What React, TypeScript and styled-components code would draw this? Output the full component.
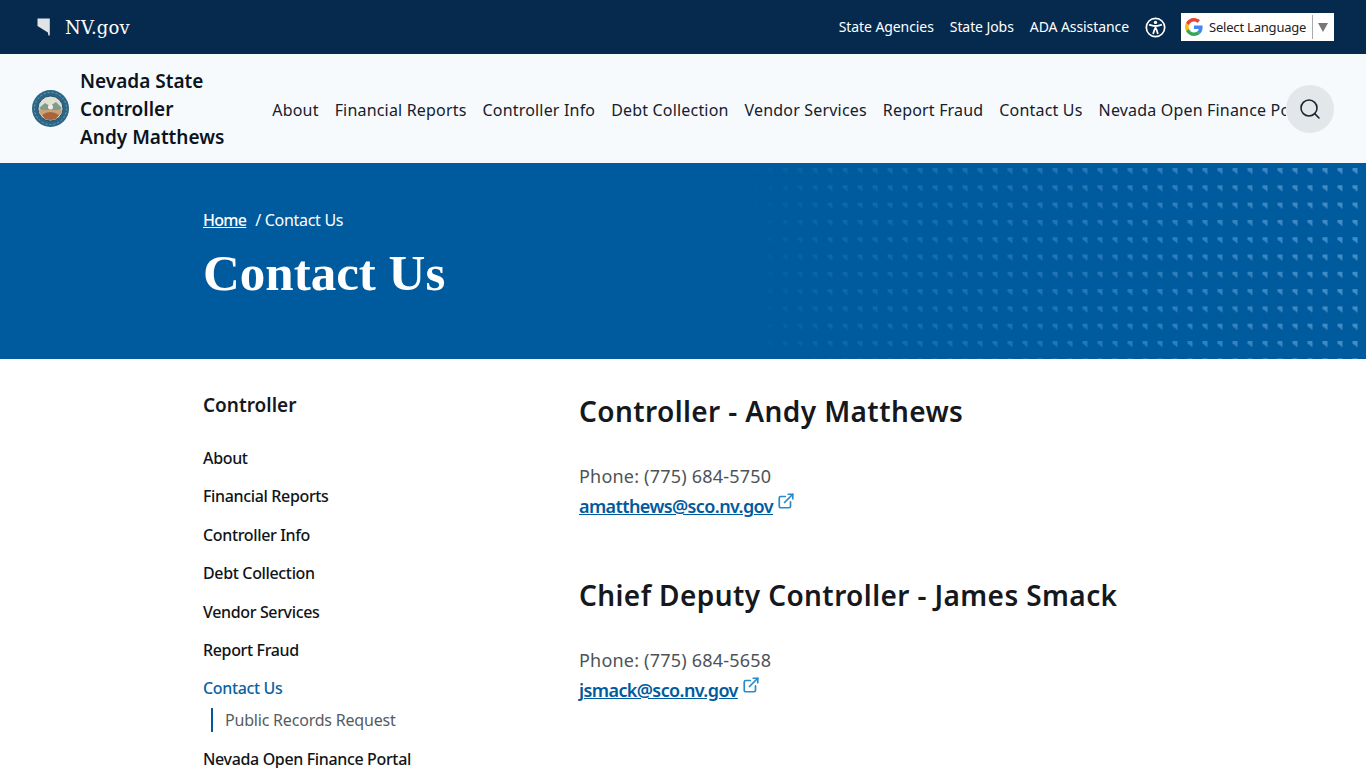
import React from 'react';
import styled, { createGlobalStyle } from 'styled-components';
import { ExternalLink, Search } from 'lucide-react';

const sans = `'Noto Sans', 'Open Sans', Arial, sans-serif`;
const serif = `'Liberation Serif', 'DejaVu Serif', Georgia, serif`;

const topLinks = ['State Agencies', 'State Jobs', 'ADA Assistance'];
const mainLinks = [
  'About',
  'Financial Reports',
  'Controller Info',
  'Debt Collection',
  'Vendor Services',
  'Report Fraud',
  'Contact Us',
  'Nevada Open Finance Portal',
];

const contacts = [
  { title: 'Controller - Andy Matthews', phone: '(775) 684-5750', email: 'amatthews@sco.nv.gov' },
  { title: 'Chief Deputy Controller - James Smack', phone: '(775) 684-5658', email: 'jsmack@sco.nv.gov' },
];

const NevadaMark: React.FC = () => (
  <svg width="13" height="18" viewBox="0 0 13 18" aria-hidden="true">
    <path d="M0.500 0.500 H12.800 V17.500 L11.400 17.500 L10.900 14.600 L0.500 8 Z" fill="#dfe4e6" />
  </svg>
);

const AccessIcon: React.FC = () => (
  <svg width="21" height="21" viewBox="0 0 21 21" fill="none" aria-hidden="true">
    <circle cx="10.500" cy="10.500" r="9.200" stroke="#fff" strokeWidth="1.700" />
    <circle cx="10.500" cy="5.400" r="1.700" fill="#fff" />
    <path
      d="M4.800 7.900 L8.400 8.800 H12.600 L16.200 7.900 M10.500 8.800 V12 M8.300 16.200 L9.800 11.800 H11.200 L12.700 16.200"
      stroke="#fff"
      strokeWidth="1.800"
      strokeLinecap="round"
      strokeLinejoin="round"
    />
  </svg>
);

const GoogleG: React.FC = () => (
  <svg width="18" height="18" viewBox="0 0 48 48" aria-hidden="true">
    <path fill="#EA4335" d="M24 9.500c3.500 0 6.700 1.300 9.100 3.500l6.800-6.800C35.800 2.400 30.300 0 24 0 14.600 0 6.500 5.400 2.600 13.200l7.900 6.100C12.400 13.700 17.700 9.500 24 9.500z" />
    <path fill="#4285F4" d="M46.900 24.500c0-1.600-.1-3.100-.4-4.500H24v9h12.900c-.6 3-2.200 5.500-4.700 7.200l7.700 6c4.500-4.200 7-10.300 7-17.700z" />
    <path fill="#FBBC05" d="M10.500 28.700c-.5-1.400-.8-3-.8-4.700s.3-3.200.8-4.700l-7.900-6.100C.9 16.500 0 20.100 0 24s.9 7.500 2.600 10.800l7.900-6.100z" />
    <path fill="#34A853" d="M24 48c6.500 0 11.900-2.100 15.900-5.800l-7.700-6c-2.200 1.400-4.900 2.300-8.200 2.300-6.300 0-11.600-4.200-13.500-9.900l-7.900 6.100C6.500 42.600 14.600 48 24 48z" />
  </svg>
);

const Seal: React.FC = () => (
  <svg width="37" height="37" viewBox="0 0 37 37" aria-hidden="true">
    <circle cx="18.500" cy="18.500" r="18.500" fill="#2b6687" />
    <circle cx="18.500" cy="18.500" r="16" fill="none" stroke="#7da0b3" strokeWidth="1" strokeDasharray="2 2" />
    <circle cx="18.500" cy="18.500" r="12.500" fill="#e2e0d2" stroke="#1d4f70" strokeWidth="1" />
    <path d="M7 18 L13 13 L18 16 L24 12 L30 18 L27 21 H10 Z" fill="#7f9c8e" />
    <path d="M6.500 20 H30.500 A12.500 12.500 0 0 1 6.500 20 Z" fill="#c9a27a" />
    <path d="M10 25 Q18 19 27 25 L24 29 Q18 31 13 29 Z" fill="#a8653c" />
    <circle cx="18.500" cy="17" r="2.500" fill="#f2f0e4" />
  </svg>
);

const BannerPattern: React.FC = () => (
  <PatternSvg aria-hidden="true">
    <defs>
      <pattern id="marks" x="12.500" y="4" width="15" height="17.300" patternUnits="userSpaceOnUse">
        <path d="M0 0 H5 V6 L3.800 6 L3.500 4.700 L0 2.600 Z" fill="#6fb4e6" />
      </pattern>
      <linearGradient id="fade" x1="0" x2="1" y1="0" y2="0">
        <stop offset="0" stopColor="#fff" stopOpacity="0" />
        <stop offset="0.15" stopColor="#fff" stopOpacity="0.14" />
        <stop offset="0.5" stopColor="#fff" stopOpacity="0.3" />
        <stop offset="1" stopColor="#fff" stopOpacity="0.6" />
      </linearGradient>
      <mask id="fadeMask">
        <rect width="100%" height="100%" fill="url(#fade)" />
      </mask>
    </defs>
    <rect width="100%" height="100%" fill="url(#marks)" mask="url(#fadeMask)" />
  </PatternSvg>
);

const App: React.FC = () => (
  <Page>
    <GlobalStyle />
    <TopBar>
      <Brand>
        <NevadaMark />
        <BrandName>NV.gov</BrandName>
      </Brand>
      <TopNav>
        {topLinks.map((link) => (
          <TopLink key={link}>{link}</TopLink>
        ))}
        <AccessButton>
          <AccessIcon />
        </AccessButton>
        <LanguageBox>
          <GoogleG />
          <LanguageLabel>Select Language</LanguageLabel>
          <LanguageDivider />
          <LanguageArrow />
        </LanguageBox>
      </TopNav>
    </TopBar>

    <Header>
      <Logo>
        <Seal />
        <LogoText>
          Nevada State
          <br />
          Controller
          <br />
          Andy Matthews
        </LogoText>
      </Logo>
      <MainNav>
        {mainLinks.map((link) => (
          <MainLink key={link}>{link}</MainLink>
        ))}
      </MainNav>
      <SearchButton>
        <Search size={24} strokeWidth={1.6} color="#1a2530" />
      </SearchButton>
    </Header>

    <Banner>
      <BannerPattern />
      <Breadcrumb>
        <CrumbLink>Home</CrumbLink>
        <CrumbCurrent>/ Contact Us</CrumbCurrent>
      </Breadcrumb>
      <PageTitle>Contact Us</PageTitle>
    </Banner>

    <Body>
      <Sidebar>
        <SideTitle>Controller</SideTitle>
        <SideList>
          {mainLinks.map((link) => (
            <React.Fragment key={link}>
              <SideLink $active={link === 'Contact Us'}>{link}</SideLink>
              {link === 'Contact Us' && <SubLink>Public Records Request</SubLink>}
            </React.Fragment>
          ))}
        </SideList>
      </Sidebar>
      <Content>
        {contacts.map((contact) => (
          <ContactBlock key={contact.email}>
            <ContactName>{contact.title}</ContactName>
            <Phone>Phone: {contact.phone}</Phone>
            <EmailRow>
              <EmailLink>{contact.email}</EmailLink>
              <ExternalLink size={18} strokeWidth={2.300} color="#2a8bcb" />
            </EmailRow>
          </ContactBlock>
        ))}
      </Content>
    </Body>
  </Page>
);

const GlobalStyle = createGlobalStyle`
  html, body {
    margin: 0;
    padding: 0;
    height: 768px;
    overflow: hidden;
    background: #fff;
    font-family: ${sans};
  }
`;

const Page = styled.div`
  width: 1366px;
  height: 768px;
  overflow: hidden;
`;

const TopBar = styled.div`
  height: 54px;
  box-sizing: border-box;
  padding: 0 32px 0 37px;
  background: #062a4e;
  display: flex;
  align-items: center;
  justify-content: space-between;
`;

const Brand = styled.div`
  display: flex;
  align-items: center;
  gap: 15px;
`;

const BrandName = styled.span`
  font-family: 'DejaVu Serif', serif;
  font-size: 18px;
  letter-spacing: 0.01em;
  color: #fff;
`;

const TopNav = styled.div`
  display: flex;
  align-items: center;
`;

const TopLink = styled.a`
  font-size: 14px;
  letter-spacing: -0.08px;
  color: #fff;
  margin-right: 16px;
  margin-bottom: 1px;
`;

const AccessButton = styled.span`
  display: flex;
  margin-right: 15px;
`;

const LanguageBox = styled.div`
  width: 153px;
  height: 28px;
  box-sizing: border-box;
  padding: 0 4px;
  background: #fff;
  display: flex;
  align-items: center;
`;

const LanguageLabel = styled.span`
  margin-left: 6px;
  font-size: 13px;
  letter-spacing: -0.2px;
  color: #222;
  white-space: nowrap;
`;

const LanguageDivider = styled.span`
  width: 1px;
  height: 24px;
  margin-left: auto;
  background: #aaa;
`;

const LanguageArrow = styled.span`
  margin: 0 2px 0 5px;
  border-left: 5px solid transparent;
  border-right: 5px solid transparent;
  border-top: 9px solid #777;
`;

const Header = styled.header`
  height: 110px;
  box-sizing: border-box;
  padding: 0 32px;
  background: #f7fafd;
  border-bottom: 1px solid #0c5a92;
  display: flex;
  align-items: center;
`;

const Logo = styled.div`
  flex: none;
  display: flex;
  align-items: center;
  gap: 11px;
`;

const LogoText = styled.div`
  font-size: 19px;
  font-weight: 600;
  line-height: 28px;
  color: #0b1420;
`;

const MainNav = styled.nav`
  flex: 1;
  min-width: 0;
  margin: 2px 0 0 48px;
  display: flex;
  gap: 16px;
  overflow: hidden;
  white-space: nowrap;
`;

const MainLink = styled.a`
  font-size: 16px;
  letter-spacing: 0.18px;
  color: #15202b;
`;

const SearchButton = styled.button`
  flex: none;
  width: 48px;
  height: 48px;
  padding: 0;
  border: 0;
  border-radius: 50%;
  background: #e4e7ea;
  display: flex;
  align-items: center;
  justify-content: center;
`;

const Banner = styled.section`
  position: relative;
  height: 195px;
  box-sizing: border-box;
  padding: 45px 0 0 203px;
  background: #005a9e;
  color: #fff;
`;

const PatternSvg = styled.svg`
  position: absolute;
  top: 0;
  right: 0;
  width: 626px;
  height: 195px;
`;

const Breadcrumb = styled.div`
  position: relative;
  display: flex;
  gap: 9px;
  font-size: 16px;
  letter-spacing: -0.3px;
  line-height: 22px;
`;

const CrumbLink = styled.a`
  font-weight: 500;
  letter-spacing: -0.7px;
  text-decoration: underline;
`;

const CrumbCurrent = styled.span``;

const PageTitle = styled.h1`
  position: relative;
  margin: 13px 0 0;
  font-family: ${serif};
  font-size: 51px;
  font-weight: 700;
  line-height: 58px;
`;

const Body = styled.main`
  padding: 32px 0 0 203px;
  display: flex;
`;

const Sidebar = styled.aside`
  width: 376px;
  flex: none;
`;

const SideTitle = styled.h2`
  margin: 0 0 20px;
  font-size: 19px;
  font-weight: 600;
  line-height: 28px;
  color: #15191e;
`;

const SideList = styled.div`
  display: flex;
  flex-direction: column;
`;

const SideLink = styled.a<{ $active?: boolean }>`
  font-size: 16px;
  font-weight: 500;
  letter-spacing: -0.35px;
  line-height: 38.400px;
  color: ${(props) => (props.$active ? '#0a639f' : '#101418')};
`;

const SubLink = styled.a`
  margin: 0 0 8px 8px;
  padding-left: 12px;
  border-left: 2px solid #005a9e;
  font-size: 16px;
  letter-spacing: -0.2px;
  line-height: 24px;
  color: #555b62;
`;

const Content = styled.div`
  flex: 1;
  padding-top: 2px;
`;

const ContactBlock = styled.div`
  height: 184px;
`;

const ContactName = styled.h2`
  margin: 0 0 33px;
  font-size: 28px;
  font-weight: 600;
  letter-spacing: 0.4px;
  line-height: 36px;
  color: #15191e;
`;

const Phone = styled.div`
  font-size: 18px;
  letter-spacing: 0.2px;
  line-height: 29px;
  color: #4d5359;
`;

const EmailRow = styled.div`
  display: flex;
  align-items: flex-start;
  gap: 4px;
  margin-top: 1px;
`;

const EmailLink = styled.a`
  font-size: 18px;
  font-weight: 600;
  letter-spacing: -0.6px;
  line-height: 29px;
  color: #005a9e;
  text-decoration: underline;
`;

export default App;
